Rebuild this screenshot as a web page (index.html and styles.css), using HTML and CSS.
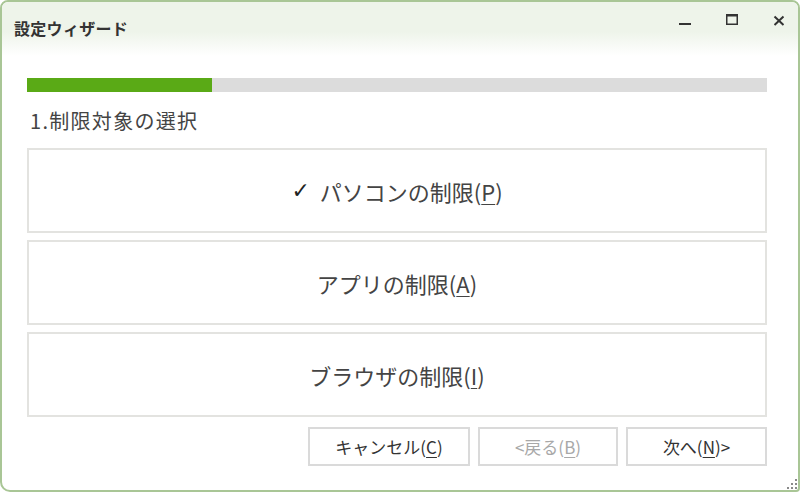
FILE: index.html
```html
<!DOCTYPE html>
<html lang="ja">
<head>
<meta charset="utf-8">
<link rel="stylesheet" href="styles.css">
</head>
<body>
<div class="window">
  <div class="titlebar">
    <div class="title">設定ウィザード</div>
    <div class="controls">
      <span class="ctl"><svg width="14" height="14" viewBox="0 0 14 14"><rect x="1" y="10" width="12" height="2" fill="#333"/></svg></span>
      <span class="ctl"><svg width="14" height="14" viewBox="0 0 14 14"><rect x="1.75" y="1.75" width="10.5" height="9.5" fill="none" stroke="#333" stroke-width="1.5"/><rect x="1" y="1" width="12" height="2.5" fill="#333"/></svg></span>
      <span class="ctl"><svg width="14" height="14" viewBox="0 0 14 14"><path d="M2.5 3.5L11.5 12M11.5 3.5L2.5 12" stroke="#333" stroke-width="2"/></svg></span>
    </div>
  </div>
  <div class="content">
    <div class="progress"><div class="fill" style="width:25%"></div></div>
    <div class="step">1.制限対象の選択</div>
    <div class="options">
      <div class="option"><span class="check">✓</span>パソコンの制限(<u>P</u>)</div>
      <div class="option">アプリの制限(<u>A</u>)</div>
      <div class="option">ブラウザの制限(<u>I</u>)</div>
    </div>
    <div class="buttons">
      <div class="btn cancel">キャンセル(<u>C</u>)</div>
      <div class="btn back disabled">&lt;戻る(<u>B</u>)</div>
      <div class="btn next">次へ(<u>N</u>)&gt;</div>
    </div>
  </div>
  <div class="grip">
    <svg width="10" height="10" viewBox="0 0 10 10" fill="#8a8a8a"><rect x="8" y="0" width="2" height="2"/><rect x="4" y="4" width="2" height="2"/><rect x="8" y="4" width="2" height="2"/><rect x="0" y="8" width="2" height="2"/><rect x="4" y="8" width="2" height="2"/><rect x="8" y="8" width="2" height="2"/></svg>
  </div>
</div>
</body>
</html>
```
FILE: styles.css
```css
html, body {
  margin: 0;
  padding: 0;
  background: #ffffff;
}
body {
  width: 800px;
  height: 492px;
  overflow: hidden;
  font-family: "Noto Sans CJK JP", "Noto Sans", sans-serif;
}
.window {
  position: relative;
  box-sizing: border-box;
  width: 800px;
  height: 492px;
  border: 2px solid #a9c696;
  border-radius: 8px 8px 4px 10px;
  background: #ffffff;
  display: flex;
  flex-direction: column;
  overflow: hidden;
}
.titlebar {
  height: 54px;
  flex: none;
  display: flex;
  align-items: flex-start;
  justify-content: space-between;
  background: linear-gradient(#eef4ea 0%, #eef4ea 55%, #ffffff 100%);
}
.title {
  margin: 14px 0 0 12px;
  font-size: 16px;
  font-weight: bold;
  color: #333;
  line-height: 24px;
  letter-spacing: 0.3px;
}
.controls {
  display: flex;
  margin: 11px 12px 0 0;
  gap: 33px;
}
.ctl {
  width: 14px;
  height: 16px;
  display: flex;
  justify-content: center;
}
.content {
  padding: 22px 31px 0 25px;
  display: flex;
  flex-direction: column;
}
.progress {
  height: 14px;
  background: #dcdcdc;
}
.fill {
  height: 100%;
  background: #5aaa16;
}
.step {
  margin-top: 16px;
  font-size: 20px;
  line-height: 26px;
  color: #444;
  padding-left: 3px;
  letter-spacing: 1.3px;
}
.options {
  margin-top: 14px;
  display: flex;
  flex-direction: column;
  gap: 7px;
}
.option {
  box-sizing: border-box;
  height: 85px;
  border: 2px solid #e3e3e0;
  display: flex;
  align-items: center;
  justify-content: center;
  font-size: 22px;
  color: #444;
}
.check {
  font-size: 22px;
  font-weight: bold;
  color: #222;
  margin-right: 10px;
  font-family: "DejaVu Sans", sans-serif;
}
.option u, .btn u {
  text-underline-offset: 3px;
  text-decoration-thickness: 1px;
}
.buttons {
  margin-top: 10px;
  display: flex;
  justify-content: flex-end;
  gap: 8px;
}
.btn {
  box-sizing: border-box;
  height: 39px;
  border: 2px solid #dadada;
  display: flex;
  align-items: center;
  justify-content: center;
  font-size: 17px;
  color: #333;
}
.cancel { width: 162px; }
.back { width: 140px; }
.next { width: 141px; }
.disabled { color: #a8a8a8; }
.grip {
  position: absolute;
  right: 1px;
  bottom: 1px;
  line-height: 0;
}
```
